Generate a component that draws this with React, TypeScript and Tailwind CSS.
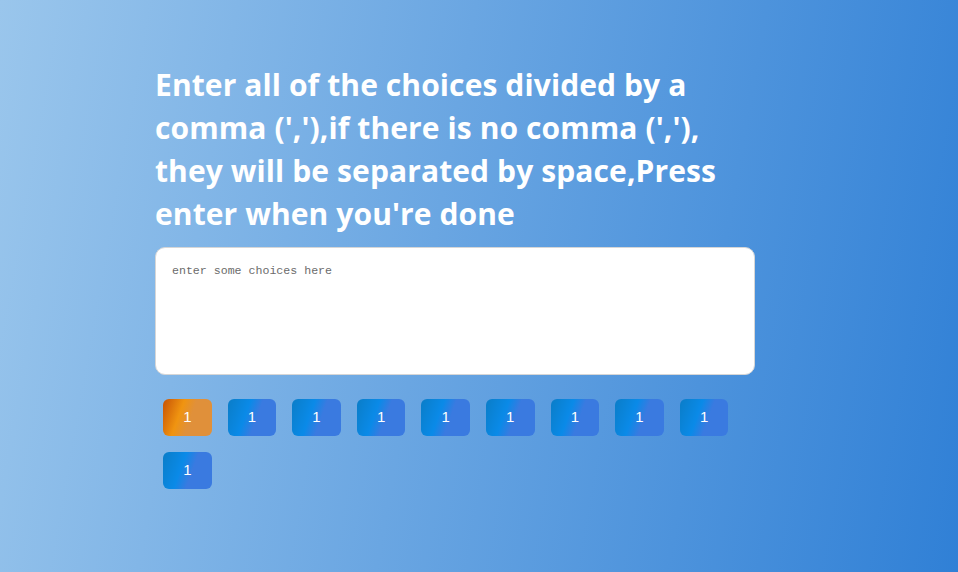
import React from "react";

export default function App() {
  const tags = Array.from({ length: 10 }, (_, i) => i);
  return (
    <div className="min-h-[572px] w-full bg-[linear-gradient(100deg,#9ac6ec_0%,#6aa6e2_45%,#3080d6_100%)] font-['Liberation_Sans',sans-serif]">
      <div className="mx-auto w-[600px] pt-[63px] -translate-x-[24px]">
        <h1 className="text-[30px] leading-[43px] font-bold text-white font-['Open_Sans',sans-serif] tracking-[0.1px]">
          Enter all of the choices divided by a comma (','),if there is no comma (','), they will be separated by space,Press enter when you're done
        </h1>
        <textarea
          placeholder="enter some choices here"
          className="mt-[12px] block h-[128px] w-[600px] resize-none rounded-[10px] border border-[#d6d6d6] bg-white px-[16px] py-[16px] font-['Liberation_Mono',monospace] text-[11.6px] leading-[14px] text-gray-700 outline-none placeholder:text-[#6b6b6b]"
        />
        <div className="mt-[16px] flex flex-wrap">
          {tags.map((i) => (
            <div
              key={i}
              className={
                i === 0
                  ? "m-2 flex h-[37px] w-[48.6px] items-center justify-center rounded-[6px] bg-[linear-gradient(110deg,#c65206_0%,#f09410_35%,#e0903a_55%)] text-[15px] text-white"
                  : "m-2 flex h-[37px] w-[48.6px] items-center justify-center rounded-[6px] bg-[linear-gradient(110deg,#0a7dc8_0%,#0a8ae8_38%,#3a7ae0_58%)] text-[15px] text-white"
              }
            >
              1
            </div>
          ))}
        </div>
      </div>
    </div>
  );
}
